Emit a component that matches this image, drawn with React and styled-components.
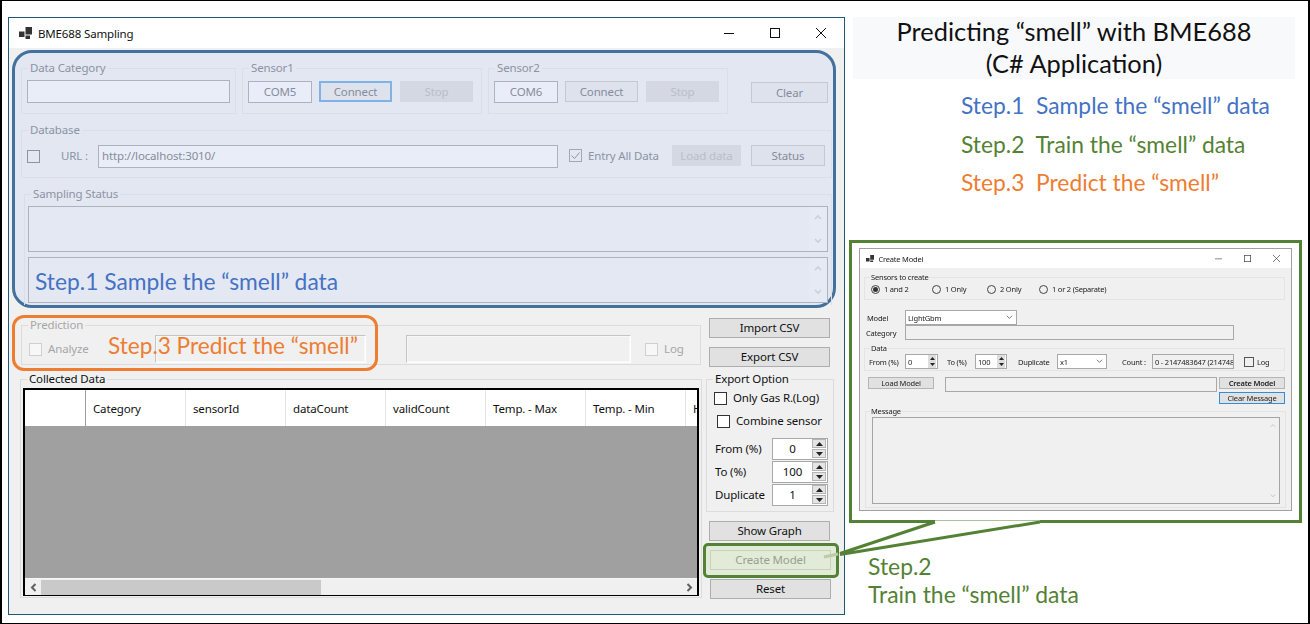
import React from 'react';
import styled, { createGlobalStyle, css } from 'styled-components';

const GlobalStyle = createGlobalStyle`
  html, body {
    margin: 0;
    padding: 0;
    background: #fff;
  }
  * {
    box-sizing: border-box;
  }
`;

const uiFont = `'Noto Sans', 'Open Sans', sans-serif`;
const slideFont = `Lato, 'Open Sans', sans-serif`;

const BLUE = '#4472c4';
const GREEN = '#548235';
const ORANGE = '#ed7d31';

const Frame = styled.div`
  position: relative;
  display: flex;
  width: 1310px;
  height: 624px;
  border: 1px solid #000;
  border-left-width: 2px;
  border-right-width: 2px;
  overflow: hidden;
  font-family: ${uiFont};
  font-size: 11.5px;
  letter-spacing: -0.15px;
  color: #111;
`;

/* ---------- main window ---------- */

const Window = styled.div`
  display: flex;
  flex-direction: column;
  flex: none;
  width: 837px;
  height: 598px;
  margin: 16px 0 0 6px;
  border: 1px solid #1f5a75;
`;

const TitleBar = styled.div`
  display: flex;
  align-items: center;
  height: 30px;
  padding-left: 10px;
  background: #fff;
`;

const TitleText = styled.span`
  margin-left: 6px;
  flex: 1;
`;

const WinButtons = styled.div`
  display: flex;
  align-items: center;
  gap: 36px;
  padding-right: 18px;
`;

const Body = styled.div`
  flex: 1;
  padding-top: 2px;
  background: #f0f0f0;
`;

const SamplePanel = styled.section`
  width: 824px;
  height: 258px;
  margin-left: 3px;
  padding: 7px 0 0 6px;
  background: #e2e7f2;
  border: 3px solid #41719c;
  border-radius: 20px;
`;

const tones = {
  tint: { line: '#d9deea', ink: '#8c93a3' },
  off: { line: '#dcdcdc', ink: '#a6a6a6' },
  on: { line: '#dcdcdc', ink: '#111' },
};

const Group = styled.fieldset`
  flex: none;
  min-width: 0;
  width: ${(p) => p.$w}px;
  height: ${(p) => p.$h}px;
  margin: ${(p) => p.$m || '0'};
  padding: 0;
  border: 1px solid ${(p) => tones[p.$tone].line};
  ${(p) => p.$open && css`border-bottom: none;`}
`;

const GroupTitle = styled.legend`
  margin-left: 6px;
  padding: 0 2px;
  line-height: 16px;
  color: ${(p) => tones[p.$tone].ink};
`;

const Row = styled.div`
  display: flex;
  align-items: ${(p) => p.$align || 'flex-start'};
  padding: ${(p) => p.$pad || '0'};
`;

const btnKinds = {
  normal: css`
    background: #e1e1e1;
    border: 1px solid #adadad;
    color: #111;
  `,
  plain: css`
    background: #dde2ed;
    border: 1px solid #c3c8d3;
    color: #868c99;
  `,
  focus: css`
    background: #dde2ed;
    border: 2px solid #7fb3e6;
    color: #868c99;
  `,
  com: css`
    background: #e9edf9;
    border: 1px solid #acb2bf;
    color: #868c99;
  `,
  off: css`
    background: #d3d8e3;
    border: 1px solid #d3d8e3;
    color: #b9bec9;
  `,
  created: css`
    background: #e2ebd8;
    border: 1px solid #c6d3b8;
    color: #95a08d;
  `,
};

const Btn = styled.div`
  display: flex;
  align-items: center;
  justify-content: center;
  flex: none;
  width: ${(p) => p.$w}px;
  height: ${(p) => p.$h || 21}px;
  margin: ${(p) => p.$m || '0'};
  padding-bottom: 1px;
  ${(p) => btnKinds[p.$kind || 'normal']}
`;

const Field = styled.div`
  display: flex;
  align-items: center;
  flex: none;
  width: ${(p) => p.$w}px;
  height: ${(p) => p.$h || 23}px;
  padding: 0 0 2px 3px;
  background: #e8edf8;
  border: 1px solid #acb2bf;
  color: #868c99;
`;

const Check = styled.span`
  display: inline-flex;
  align-items: center;
  justify-content: center;
  flex: none;
  width: 13px;
  height: 13px;
  margin: ${(p) => p.$m || '0'};
  background: ${(p) => p.$bg || 'transparent'};
  border: 1px solid ${(p) => p.$line || '#333'};
`;

const Caption = styled.span`
  flex: none;
  width: ${(p) => (p.$w ? `${p.$w}px` : 'auto')};
  margin: ${(p) => p.$m || '0'};
  color: ${(p) => p.$color || '#111'};
  line-height: 16px;
  white-space: nowrap;
`;

const StatusStack = styled.div`
  padding: 4px 0 0 3px;
`;

const StatusBox = styled.div`
  display: flex;
  width: 800px;
  height: 46px;
  margin-bottom: 5px;
  border: 1px solid #acb2bf;
  background: #e4e8f3;
`;

const StatusText = styled.div`
  flex: 1;
  padding: 9px 0 0 6px;
  font-family: ${slideFont};
  font-size: 22.8px;
  letter-spacing: 0;
  line-height: 28px;
  color: ${BLUE};
  white-space: nowrap;
`;

const ScrollColumn = styled.div`
  display: flex;
  flex-direction: column;
  align-items: center;
  justify-content: space-between;
  flex: none;
  width: 18px;
  padding: 7px 0;
  background: #e6eaf5;
`;

/* ---------- lower half ---------- */

const Lower = styled.div`
  display: flex;
`;

const LeftColumn = styled.div`
  flex: none;
  width: 697px;
  padding-left: 11px;
`;

const PredictionWrap = styled.div`
  position: relative;
  width: 680px;
  margin: 9px 0 0 1px;
`;

const OrangeNote = styled.div`
  position: absolute;
  left: -9px;
  top: -2px;
  display: flex;
  align-items: center;
  width: 366px;
  height: 56px;
  padding: 5px 0 0 93px;
  border: 3px solid ${ORANGE};
  border-radius: 12px;
  font-family: ${slideFont};
  font-size: 22.6px;
  letter-spacing: 0;
  color: ${ORANGE};
  white-space: nowrap;
`;

const DimField = styled.div`
  flex: none;
  width: ${(p) => p.$w}px;
  height: 28px;
  margin: ${(p) => p.$m || '0'};
  background: #f0f0f0;
  border: 1px solid #c4c4c4;
  border-right-color: #fff;
  border-bottom-color: #fff;
  box-shadow: 0 0 0 1px #f7f7f7 inset;
`;

const Grid = styled.div`
  display: flex;
  flex-direction: column;
  width: 676px;
  height: 208px;
  margin: 1px 0 0 2px;
  border: 2px solid #000;
  border-bottom-width: 1px;
  background: #a0a0a0;
`;

const GridHead = styled.div`
  display: flex;
  flex: none;
  height: 36px;
  background: #fff;
  overflow: hidden;
`;

const CornerCell = styled.div`
  flex: none;
  width: 61px;
  border-right: 1px solid #a0a0a0;
`;

const HeadCell = styled.div`
  display: flex;
  align-items: center;
  flex: none;
  width: ${(p) => p.$w || 100}px;
  padding-left: 7px;
  border-right: ${(p) => (p.$w ? 'none' : '1px solid #e4e4e4')};
  white-space: nowrap;
`;

const GridFill = styled.div`
  flex: 1;
`;

const HScroll = styled.div`
  display: flex;
  align-items: center;
  flex: none;
  height: 17px;
  padding-top: 1px;
  background: #f0f0f0;
  border-top: 1px solid #f7f7f7;
`;

const ScrollArrow = styled.div`
  display: flex;
  align-items: center;
  justify-content: center;
  flex: none;
  width: 16px;
  height: 100%;
`;

const ScrollThumb = styled.div`
  flex: none;
  width: 280px;
  height: 15px;
  background: #c9c9c9;
`;

const ScrollTrack = styled.div`
  flex: 1;
`;

const RightColumn = styled.div`
  flex: none;
  width: 130px;
  padding-top: 10px;
`;

const SpinStack = styled.div`
  margin-top: 8px;
`;

const SpinRow = styled.div`
  display: flex;
  align-items: center;
  height: 23px;
  padding-left: 8px;
`;

const Spinner = styled.div`
  display: flex;
  align-items: center;
  flex: none;
  width: 56px;
  height: 22px;
  background: #fff;
  border: 1px solid #a9a9a9;
`;

const SpinValue = styled.span`
  flex: 1;
  text-align: center;
`;

const SpinButtons = styled.div`
  display: flex;
  flex-direction: column;
  gap: 1px;
  flex: none;
  margin-right: 1px;
`;

const SpinButton = styled.div`
  display: flex;
  align-items: center;
  justify-content: center;
  width: 14px;
  height: 9px;
  background: #e4e4e4;
  border: 1px solid #b5b5b5;
`;

const GreenNote = styled.div`
  width: 136px;
  height: 35px;
  margin: 2px 0 1px -3px;
  padding: 4px;
  background: #e2ebd8;
  border: 3px solid ${GREEN};
  border-radius: 5px;
`;

/* ---------- right side of the slide ---------- */

const Side = styled.div`
  flex: none;
  width: 460px;
  padding: 16px 0 0 8px;
  font-family: ${slideFont};
  letter-spacing: 0;
`;

const Headline = styled.div`
  display: flow-root;
  width: 442px;
  height: 62px;
  background: #f8f9fb;
`;

const HeadlineText = styled.h1`
  margin: -2px 0 0;
  font-family: ${slideFont};
  font-size: 25.4px;
  font-weight: 400;
  line-height: 32px;
  text-align: center;
  color: #111;
`;

const Steps = styled.div`
  height: 161px;
  padding: 7px 0 0 108px;
`;

const Step = styled.div`
  font-size: 22.8px;
  line-height: 38.5px;
  color: ${(p) => p.$color};
  white-space: pre;
`;

const BigBox = styled.div`
  width: 453px;
  height: 283px;
  margin-left: -4px;
  padding: 5px 0 0 7px;
  border: 3px solid ${GREEN};
`;

const StepTwo = styled.div`
  margin: 29px 0 0 15px;
  font-size: 22.9px;
  line-height: 28px;
  color: ${GREEN};
`;

const Callout = styled.svg`
  position: absolute;
  left: 0;
  top: 0;
  pointer-events: none;
`;

/* ---------- the small Create Model picture ---------- */

const Mini = styled.div`
  display: flex;
  flex-direction: column;
  width: 433px;
  height: 263px;
  border: 1px solid #a0a0a0;
  font-family: ${uiFont};
  font-size: 7.5px;
  letter-spacing: -0.2px;
  color: #222;
  filter: blur(0.3px);
`;

const MiniTitle = styled.div`
  display: flex;
  align-items: center;
  flex: none;
  height: 19px;
  padding-left: 6px;
  background: #fff;
`;

const MiniName = styled.span`
  flex: 1;
  margin-left: 4px;
`;

const MiniButtons = styled.div`
  display: flex;
  align-items: center;
  gap: 22px;
  padding-right: 11px;
`;

const MiniBody = styled.div`
  flex: 1;
  padding: 4px 0 0 4px;
  background: #f0f0f0;
`;

const MiniGroup = styled.fieldset`
  width: ${(p) => p.$w || 421}px;
  height: ${(p) => p.$h}px;
  margin: ${(p) => p.$m || '0'};
  padding: 0;
  min-width: 0;
  border: 1px solid #e4e4e4;
`;

const MiniLegend = styled.legend`
  margin-left: ${(p) => p.$m || 5}px;
  padding: 0 1px;
  line-height: 10px;
`;

const MiniRow = styled.div`
  display: flex;
  align-items: ${(p) => p.$align || 'center'};
  margin: ${(p) => p.$m || '0'};
  padding: ${(p) => p.$pad || '0'};
`;

const MiniLabel = styled.span`
  flex: none;
  width: ${(p) => (p.$w ? `${p.$w}px` : 'auto')};
  margin: ${(p) => p.$m || '0'};
  white-space: nowrap;
`;

const RadioItem = styled.div`
  display: flex;
  align-items: center;
  flex: none;
  gap: 4px;
  width: ${(p) => (p.$w ? `${p.$w}px` : 'auto')};
`;

const RadioDot = styled.span`
  display: flex;
  align-items: center;
  justify-content: center;
  width: 9px;
  height: 9px;
  border: 1px solid #444;
  border-radius: 50%;
  &::after {
    content: '';
    display: ${(p) => (p.$on ? 'block' : 'none')};
    width: 5px;
    height: 5px;
    border-radius: 50%;
    background: #333;
  }
`;

const MiniField = styled.div`
  display: flex;
  align-items: center;
  justify-content: space-between;
  flex: none;
  width: ${(p) => p.$w}px;
  height: ${(p) => p.$h || 15}px;
  margin: ${(p) => p.$m || '0'};
  padding: 0 3px 0 2px;
  background: ${(p) => p.$bg || '#f0f0f0'};
  border: 1px solid #a8a8a8;
  white-space: nowrap;
  overflow: hidden;
`;

const MiniSpinField = styled(MiniField)`
  padding-right: 1px;
`;

const MiniSpinButtons = styled.div`
  display: flex;
  flex-direction: column;
  align-items: center;
  justify-content: space-around;
  flex: none;
  width: 8px;
  height: 13px;
  background: #dedede;
`;

const MiniArrow = styled.svg`
  display: block;
`;

const MiniCheck = styled.span`
  flex: none;
  width: 10px;
  height: 10px;
  margin: 0 3px 0 10px;
  border: 1px solid #555;
`;

const MiniBtn = styled.div`
  display: flex;
  align-items: center;
  justify-content: center;
  flex: none;
  width: 66px;
  height: ${(p) => p.$h || 12}px;
  margin: ${(p) => p.$m || '0'};
  background: #e1e1e1;
  border: ${(p) => (p.$focus ? '1px solid #2c8fe0' : '1px solid #b5b5b5')};
  font-weight: ${(p) => (p.$bold ? 600 : 400)};
  white-space: nowrap;
`;

const MiniColumn = styled.div`
  display: flex;
  flex-direction: column;
  flex: none;
`;

const MessageBox = styled.div`
  display: flex;
  justify-content: flex-end;
  width: 408px;
  height: 87px;
  margin: 1px 0 0 6px;
  background: #f0f0f0;
  border: 1px solid #a5a5a5;
`;

const MiniScroll = styled.div`
  display: flex;
  flex-direction: column;
  align-items: center;
  justify-content: space-between;
  width: 12px;
  padding: 5px 0;
`;

/* ---------- little drawings ---------- */

const AppIcon = ({ scale = 1 }) => (
  <svg width={13 * scale} height={12 * scale} viewBox="0 0 13 12">
    <path fill="#333" d="M0 4.5h5.5V10H0zM6.5 0H13v7.5H6.5zM6.5 8.5H11V12H6.5z" />
  </svg>
);

const WinMin = ({ s = 10, c = '#111' }) => (
  <svg width={s} height={s} viewBox="0 0 10 10">
    <path d="M0 5.5h10" stroke={c} fill="none" />
  </svg>
);

const WinMax = ({ s = 10, c = '#111' }) => (
  <svg width={s} height={s} viewBox="0 0 10 10">
    <rect x="0.5" y="0.5" width="9" height="9" stroke={c} fill="none" />
  </svg>
);

const WinClose = ({ s = 10, c = '#111' }) => (
  <svg width={s} height={s} viewBox="0 0 10 10">
    <path d="M0 0l10 10M10 0L0 10" stroke={c} fill="none" />
  </svg>
);

const Chevron = ({ dir, c = '#c9cfdc', w = 8, sw = 1.6 }) => {
  const paths = {
    up: 'M1 5l3-3 3 3',
    down: 'M1 2l3 3 3-3',
  };
  return (
    <svg width={w} height={(w * 7) / 8} viewBox="0 0 8 7">
      <path d={paths[dir]} stroke={c} strokeWidth={sw} fill="none" />
    </svg>
  );
};

const SideArrow = ({ dir }) => (
  <svg width="7" height="9" viewBox="0 0 7 9">
    <path
      d={dir === 'left' ? 'M5.5 1L2 4.5 5.5 8' : 'M1.5 1L5 4.5 1.5 8'}
      stroke="#606060"
      strokeWidth="2"
      fill="none"
    />
  </svg>
);

const Tick = () => (
  <svg width="11" height="11" viewBox="0 0 11 11">
    <path d="M1.5 5.5l3 3 5-6" stroke="#8c93a3" fill="none" />
  </svg>
);

const SpinArrow = ({ dir }) => (
  <svg width="7" height="4" viewBox="0 0 7 4">
    <path fill="#222" d={dir === 'up' ? 'M3.5 0L7 4H0z' : 'M0 0h7L3.5 4z'} />
  </svg>
);

const columns = ['Category', 'sensorId', 'dataCount', 'validCount', 'Temp. - Max', 'Temp. - Min'];

const spinners = [
  { label: 'From (%)', value: '0' },
  { label: 'To (%)', value: '100' },
  { label: 'Duplicate', value: '1' },
];

const radios = [
  { label: '1 and 2', w: 61, on: true },
  { label: '1 Only', w: 55 },
  { label: '2 Only', w: 52 },
  { label: '1 or 2 (Separate)' },
];

function MiniSpin({ value, w }) {
  return (
    <MiniSpinField $w={w} $bg="#fff">
      {value}
      <MiniSpinButtons>
        <MiniArrow width="5" height="3" viewBox="0 0 5 3">
          <path fill="#222" d="M2.5 0L5 3H0z" />
        </MiniArrow>
        <MiniArrow width="5" height="3" viewBox="0 0 5 3">
          <path fill="#222" d="M0 0h5L2.5 3z" />
        </MiniArrow>
      </MiniSpinButtons>
    </MiniSpinField>
  );
}

function CreateModelPicture() {
  return (
    <Mini>
      <MiniTitle>
        <AppIcon scale={0.65} />
        <MiniName>Create Model</MiniName>
        <MiniButtons>
          <WinMin s={7} c="#555" />
          <WinMax s={7} c="#444" />
          <WinClose s={7} c="#444" />
        </MiniButtons>
      </MiniTitle>
      <MiniBody>
        <MiniGroup $h={28}>
          <MiniLegend>Sensors to create</MiniLegend>
          <MiniRow $pad="2px 0 0 6px">
            {radios.map((r) => (
              <RadioItem key={r.label} $w={r.w}>
                <RadioDot $on={r.on} />
                {r.label}
              </RadioItem>
            ))}
          </MiniRow>
        </MiniGroup>
        <MiniRow $m="10px 0 0 3px">
          <MiniLabel $w={38}>Model</MiniLabel>
          <MiniField $w={112} $bg="#fff">
            LightGbm
            <Chevron dir="down" c="#666" w={7} sw={1} />
          </MiniField>
        </MiniRow>
        <MiniRow $m="0 0 0 2px">
          <MiniLabel $w={39}>Category</MiniLabel>
          <MiniField $w={329} />
        </MiniRow>
        <MiniGroup $h={28} $m="3px 0 0 0">
          <MiniLegend>Data</MiniLegend>
          <MiniRow $pad="1px 0 0 4px">
            <MiniLabel $w={36}>From (%)</MiniLabel>
            <MiniSpin value="0" w={33} />
            <MiniLabel $w={28} $m="0 0 0 9px">To (%)</MiniLabel>
            <MiniSpin value="100" w={32} />
            <MiniLabel $w={39} $m="0 0 0 11px">Duplicate</MiniLabel>
            <MiniField $w={50} $bg="#fff">
              x1
              <Chevron dir="down" c="#666" w={7} sw={1} />
            </MiniField>
            <MiniLabel $w={30} $m="0 0 0 15px">Count :</MiniLabel>
            <MiniField $w={82}>0 - 2147483647 (214748</MiniField>
            <MiniCheck />
            <MiniLabel>Log</MiniLabel>
          </MiniRow>
        </MiniGroup>
        <MiniRow $align="flex-start" $m="6px 0 0 4px">
          <MiniBtn>Load Model</MiniBtn>
          <MiniField $w={272} $m="0 2px 0 11px" />
          <MiniColumn>
            <MiniBtn $bold>Create Model</MiniBtn>
            <MiniBtn $focus $m="3px 0 0 0">Clear Message</MiniBtn>
          </MiniColumn>
        </MiniRow>
        <MiniGroup $h={102} $m="2px 0 0 1px">
          <MiniLegend $m={4}>Message</MiniLegend>
          <MessageBox>
            <MiniScroll>
              <Chevron dir="up" c="#b5b5b5" w={6} sw={1} />
              <Chevron dir="down" c="#b5b5b5" w={6} sw={1} />
            </MiniScroll>
          </MessageBox>
        </MiniGroup>
      </MiniBody>
    </Mini>
  );
}

function SensorGroup({ title, port, focused, m }) {
  return (
    <Group $tone="tint" $w={240} $h={54} $m={m}>
      <GroupTitle $tone="tint">{title}</GroupTitle>
      <Row $pad="5px 0 0 5px">
        <Btn $kind="com" $w={64} $h={22}>{port}</Btn>
        <Btn $kind={focused ? 'focus' : 'plain'} $w={73} $m="0 0 0 7px">Connect</Btn>
        <Btn $kind="off" $w={73} $m="0 0 0 8px">Stop</Btn>
      </Row>
    </Group>
  );
}

function App() {
  return (
    <>
      <GlobalStyle />
      <Frame>
        <Window>
          <TitleBar>
            <AppIcon />
            <TitleText>BME688 Sampling</TitleText>
            <WinButtons>
              <WinMin />
              <WinMax />
              <WinClose />
            </WinButtons>
          </TitleBar>
          <Body>
            <SamplePanel>
              <Row>
                <Group $tone="tint" $w={215} $h={54}>
                  <GroupTitle $tone="tint">Data Category</GroupTitle>
                  <Row $pad="4px 0 0 5px">
                    <Field $w={203} />
                  </Row>
                </Group>
                <SensorGroup title="Sensor1" port="COM5" focused m="0 0 0 6px" />
                <SensorGroup title="Sensor2" port="COM6" m="0 0 0 6px" />
                <Btn $kind="plain" $w={77} $m="22px 0 0 23px">Clear</Btn>
              </Row>
              <Group $tone="tint" $w={811} $h={56} $m="8px 0 0 0">
                <GroupTitle $tone="tint">Database</GroupTitle>
                <Row $pad="7px 0 0 5px" $align="center">
                  <Check $line="#8c93a3" />
                  <Caption $w={27} $m="0 10px 2px 21px" $color="#8c93a3">URL :</Caption>
                  <Field $w={460}>http://localhost:3010/</Field>
                  <Check $line="#a2a8b6" $m="0 6px 2px 11px">
                    <Tick />
                  </Check>
                  <Caption $w={71} $m="0 0 2px 0" $color="#8c93a3">Entry All Data</Caption>
                  <Btn $kind="off" $w={69} $m="0 0 2px 13px">Load data</Btn>
                  <Btn $kind="plain" $w={74} $m="0 0 2px 10px">Status</Btn>
                </Row>
              </Group>
              <Group $tone="tint" $open $w={808} $h={119} $m="8px 0 0 3px">
                <GroupTitle $tone="tint">Sampling Status</GroupTitle>
                <StatusStack>
                  <StatusBox>
                    <StatusText />
                    <ScrollColumn>
                      <Chevron dir="up" />
                      <Chevron dir="down" />
                    </ScrollColumn>
                  </StatusBox>
                  <StatusBox>
                    <StatusText>Step.1 Sample the “smell” data</StatusText>
                    <ScrollColumn>
                      <Chevron dir="up" />
                      <Chevron dir="down" />
                    </ScrollColumn>
                  </StatusBox>
                </StatusStack>
              </Group>
            </SamplePanel>
            <Lower>
              <LeftColumn>
                <PredictionWrap>
                  <Group $tone="off" $w={680} $h={48}>
                    <GroupTitle $tone="off">Prediction</GroupTitle>
                    <Row $pad="2px 0 0 7px" $align="center">
                      <Check $line="#cfcfcf" $bg="#f7f7f7" />
                      <Caption $w={41} $m="0 0 0 6px" $color="#a6a6a6">Analyze</Caption>
                      <DimField $w={211} $m="0 0 0 66px" />
                      <DimField $w={225} $m="0 0 0 40px" />
                      <Check $line="#cfcfcf" $bg="#f7f7f7" $m="0 6px 0 14px" />
                      <Caption $color="#a6a6a6">Log</Caption>
                    </Row>
                  </Group>
                  <OrangeNote>Step.3 Predict the “smell”</OrangeNote>
                </PredictionWrap>
                <Group $tone="on" $w={682} $h={227} $m="6px 0 0 0">
                  <GroupTitle $tone="on">Collected Data</GroupTitle>
                  <Grid>
                    <GridHead>
                      <CornerCell />
                      {columns.map((name) => (
                        <HeadCell key={name}>{name}</HeadCell>
                      ))}
                      <HeadCell $w={15}>H</HeadCell>
                    </GridHead>
                    <GridFill />
                    <HScroll>
                      <ScrollArrow><SideArrow dir="left" /></ScrollArrow>
                      <ScrollThumb />
                      <ScrollTrack />
                      <ScrollArrow><SideArrow dir="right" /></ScrollArrow>
                    </HScroll>
                  </Grid>
                </Group>
              </LeftColumn>
              <RightColumn>
                <Btn $w={121} $h={20} $m="0 0 0 3px">Import CSV</Btn>
                <Btn $w={121} $h={20} $m="9px 0 0 3px">Export CSV</Btn>
                <Group $tone="on" $w={128} $h={141} $m="4px 0 0 0">
                  <GroupTitle $tone="on">Export Option</GroupTitle>
                  <Row $pad="3px 0 0 7px" $align="center">
                    <Check $bg="#fff" />
                    <Caption $m="0 0 1px 6px">Only Gas R.(Log)</Caption>
                  </Row>
                  <Row $pad="6px 0 0 10px" $align="center">
                    <Check $bg="#fff" />
                    <Caption $m="0 0 0 6px">Combine sensor</Caption>
                  </Row>
                  <SpinStack>
                    {spinners.map((s) => (
                      <SpinRow key={s.label}>
                        <Caption $w={57}>{s.label}</Caption>
                        <Spinner>
                          <SpinValue>{s.value}</SpinValue>
                          <SpinButtons>
                            <SpinButton><SpinArrow dir="up" /></SpinButton>
                            <SpinButton><SpinArrow dir="down" /></SpinButton>
                          </SpinButtons>
                        </Spinner>
                      </SpinRow>
                    ))}
                  </SpinStack>
                </Group>
                <Btn $w={121} $h={20} $m="9px 0 0 3px">Show Graph</Btn>
                <GreenNote>
                  <Btn $kind="created" $w={121} $h={20}>Create Model</Btn>
                </GreenNote>
                <Btn $w={121} $h={20} $m="0 0 0 4px">Reset</Btn>
              </RightColumn>
            </Lower>
          </Body>
        </Window>
        <Side>
          <Headline>
            <HeadlineText>
              Predicting “smell” with BME688
              <br />
              (C# Application)
            </HeadlineText>
          </Headline>
          <Steps>
            <Step $color={BLUE}>Step.1  Sample the “smell” data</Step>
            <Step $color={GREEN}>Step.2  Train the “smell” data</Step>
            <Step $color={ORANGE}>Step.3  Predict the “smell”</Step>
          </Steps>
          <BigBox>
            <CreateModelPicture />
          </BigBox>
          <StepTwo>
            Step.2
            <br />
            Train the “smell” data
          </StepTwo>
        </Side>
        <Callout width="1310" height="624" viewBox="0 0 1310 624">
          <path d="M933 519.5H1038V523H933z" fill="#fff" />
          <path d="M933 521L838 552.5M1038 521L838 553.5" stroke={GREEN} strokeWidth="3" fill="none" />
          <path d="M836 553L822 556" stroke="#b9cba8" strokeWidth="3" fill="none" />
        </Callout>
      </Frame>
    </>
  );
}

export default App;
